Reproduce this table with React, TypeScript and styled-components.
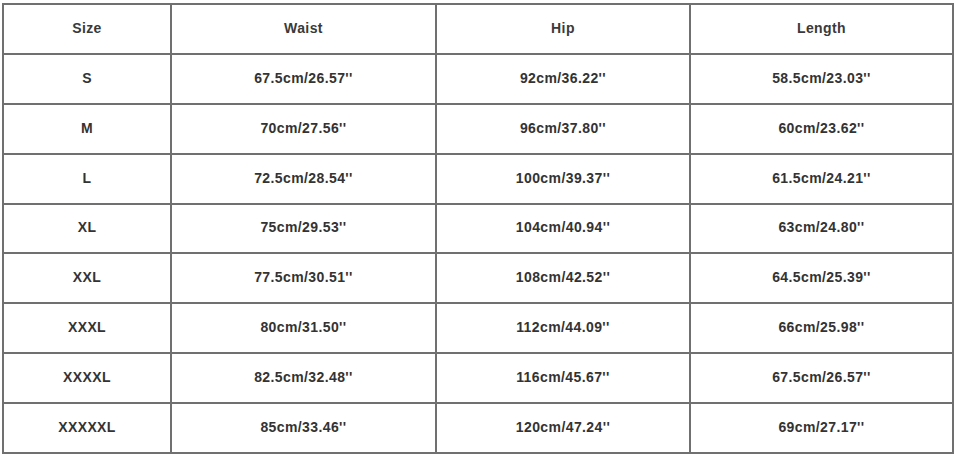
import styled, { createGlobalStyle } from "styled-components";

const GlobalStyle = createGlobalStyle`
  html, body {
    margin: 0;
    padding: 0;
    background: #ffffff;
  }
  body {
    font-family: "Liberation Sans", Arial, sans-serif;
  }
`;

const sizes = [
  { size: "S", waist: "67.5cm/26.57''", hip: "92cm/36.22''", length: "58.5cm/23.03''" },
  { size: "M", waist: "70cm/27.56''", hip: "96cm/37.80''", length: "60cm/23.62''" },
  { size: "L", waist: "72.5cm/28.54''", hip: "100cm/39.37''", length: "61.5cm/24.21''" },
  { size: "XL", waist: "75cm/29.53''", hip: "104cm/40.94''", length: "63cm/24.80''" },
  { size: "XXL", waist: "77.5cm/30.51''", hip: "108cm/42.52''", length: "64.5cm/25.39''" },
  { size: "XXXL", waist: "80cm/31.50''", hip: "112cm/44.09''", length: "66cm/25.98''" },
  { size: "XXXXL", waist: "82.5cm/32.48''", hip: "116cm/45.67''", length: "67.5cm/26.57''" },
  { size: "XXXXXL", waist: "85cm/33.46''", hip: "120cm/47.24''", length: "69cm/27.17''" },
];

const headers = ["Size", "Waist", "Hip", "Length"];

const Page = styled.div`
  padding: 3px 0 0 2px;
`;

const Chart = styled.div`
  width: 952px;
  height: 451px;
  box-sizing: border-box;
  display: grid;
  grid-template-columns: 166px 263px 252px 261px;
  grid-template-rows: repeat(9, 1fr);
  gap: 2px;
  padding: 2px;
  background: #707070;
`;

const Cell = styled.div<{ $head?: boolean }>`
  background: #ffffff;
  display: flex;
  align-items: center;
  justify-content: center;
  padding-bottom: 2px;
  font-size: 14px;
  font-weight: 700;
  letter-spacing: 0.4px;
  color: ${({ $head }) => ($head ? "#3a3a3a" : "#333333")};
  white-space: nowrap;
`;

export default function App() {
  return (
    <>
      <GlobalStyle />
      <Page>
        <Chart>
          {headers.map((h) => (
            <Cell key={h} $head>
              {h}
            </Cell>
          ))}
          {sizes.map((r) => [
            <Cell key={r.size + "s"}>{r.size}</Cell>,
            <Cell key={r.size + "w"}>{r.waist}</Cell>,
            <Cell key={r.size + "h"}>{r.hip}</Cell>,
            <Cell key={r.size + "l"}>{r.length}</Cell>,
          ])}
        </Chart>
      </Page>
    </>
  );
}
